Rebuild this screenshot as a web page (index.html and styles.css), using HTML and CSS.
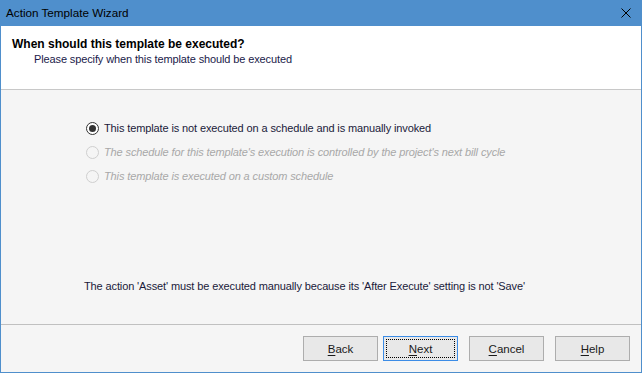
FILE: index.html
```html
<!DOCTYPE html>
<html lang="en">
<head>
  <meta charset="UTF-8">
  <title>Action Template Wizard</title>
  <link rel="stylesheet" href="styles.css">
</head>
<body>
  <div class="window">
    <div class="titlebar">
      <span class="title">Action Template Wizard</span>
      <svg class="close" width="10" height="10" viewBox="0 0 10 10">
        <path d="M0.5 0.5 L9.5 9.5 M9.5 0.5 L0.5 9.5" stroke="#000" stroke-width="1" fill="none"/>
      </svg>
    </div>

    <div class="header">
      <h1>When should this template be executed?</h1>
      <p>Please specify when this template should be executed</p>
    </div>

    <div class="content">
      <div class="options">
        <label class="option">
          <span class="radio checked"></span>
          <span>This template is not executed on a schedule and is manually invoked</span>
        </label>
        <label class="option disabled">
          <span class="radio"></span>
          <span>The schedule for this template's execution is controlled by the project's next bill cycle</span>
        </label>
        <label class="option disabled">
          <span class="radio"></span>
          <span>This template is executed on a custom schedule</span>
        </label>
      </div>
      <p class="note">The action 'Asset' must be executed manually because its 'After Execute' setting is not 'Save'</p>
    </div>

    <div class="footer">
      <button class="btn"><u>B</u>ack</button>
      <button class="btn focused"><span class="focus"><u>N</u>ext</span></button>
      <button class="btn gap"><u>C</u>ancel</button>
      <button class="btn gap"><u>H</u>elp</button>
    </div>
  </div>
</body>
</html>
```

FILE: styles.css
```css
* {
  box-sizing: border-box;
  margin: 0;
  padding: 0;
}

body {
  font-family: 'Liberation Sans', Arial, sans-serif;
  font-size: 11px;
  letter-spacing: -0.12px;
  background: #f5f5f5;
}

.window {
  width: 642px;
  height: 373px;
  display: flex;
  flex-direction: column;
  border: 1px solid #4f8fcc;
  border-top: none;
  background: #f5f5f5;
}

.titlebar {
  height: 26px;
  margin: 0 -1px;
  background: #4f8fcc;
  display: flex;
  align-items: center;
  justify-content: space-between;
  padding: 0 10px 1px 6px;
  color: #000;
}

.title {
  font-size: 11.7px;
  letter-spacing: 0;
}

.close {
  display: block;
  margin-right: 1px;
}

.header {
  height: 64px;
  background: #fff;
  border-bottom: 1px solid #c8c8c8;
  padding: 11px 0 0 11px;
}

.header h1 {
  font-size: 12px;
  font-weight: bold;
  line-height: 15px;
  letter-spacing: 0;
  color: #000;
}

.header p {
  margin-left: 22px;
  line-height: 15px;
  color: #1a1a4a;
}

.content {
  flex: 1;
  padding: 31px 0 0 85px;
  display: flex;
  flex-direction: column;
}

.options {
  display: flex;
  flex-direction: column;
  gap: 10px;
}

.option {
  display: flex;
  align-items: center;
  gap: 5px;
  height: 14px;
  color: #1a1a3a;
}

.option.disabled {
  color: #a8a8a8;
  font-style: italic;
}

.radio {
  width: 13px;
  height: 13px;
  border: 1px solid #333;
  border-radius: 50%;
  background: #fff;
  position: relative;
}

.option.disabled .radio {
  border-color: #cfcfcf;
  background: #f5f5f5;
}

.radio.checked::after {
  content: "";
  position: absolute;
  left: 2px;
  top: 2px;
  width: 7px;
  height: 7px;
  border-radius: 50%;
  background: #333;
}

.note {
  margin-top: auto;
  margin-bottom: 32px;
  margin-left: -2px;
  color: #1a1a3a;
}

.footer {
  height: 48px;
  border-top: 1px solid #c0c0c0;
  display: flex;
  padding: 11px 0 0 302px;
}

.btn {
  width: 75px;
  height: 25px;
  margin-right: 5px;
  font-family: inherit;
  font-size: 11.5px;
  letter-spacing: 0;
  color: #1a1a1a;
  background: #e8e8e8;
  border: 1px solid #adadad;
  display: flex;
  align-items: center;
  justify-content: center;
}

.btn.gap {
  margin-left: 6px;
}

.btn u {
  text-decoration-thickness: 1px;
  text-underline-offset: 2px;
}

.btn.focused {
  border-color: #3c8ce6;
  padding: 2px;
}

.focus {
  flex: 1;
  align-self: stretch;
  display: flex;
  align-items: center;
  justify-content: center;
  border: 1px dotted #000;
}
```
